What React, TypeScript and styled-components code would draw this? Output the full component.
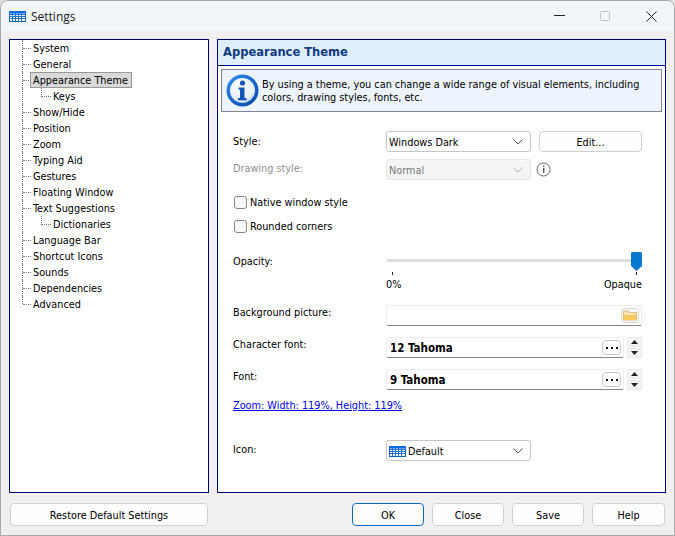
import React from "react";
import styled, { createGlobalStyle, css } from "styled-components";

const Global = createGlobalStyle`
  html, body { margin: 0; padding: 0; background: #dcdcdc; }
  body {
    font-family: "DejaVu Sans Condensed", "DejaVu Sans", "Noto Sans", sans-serif;
    font-stretch: condensed;
    font-size: 10.8px;
    color: #000;
  }
  * { box-sizing: border-box; }
`;

const Window = styled.div`
  width: 675px;
  height: 536px;
  display: flex;
  flex-direction: column;
  background: #f0f0f0;
  border: 1px solid #a8a8a8;
  border-radius: 8px 8px 0 0;
  overflow: hidden;
`;

const TitleBar = styled.div`
  height: 30px;
  flex: none;
  display: flex;
  align-items: center;
  padding-left: 8px;
  background: #f3f6f9;
`;

const TitleText = styled.span`
  margin-left: 5px;
  font-size: 12px;
  font-family: "Open Sans", "Liberation Sans", sans-serif;
  font-stretch: normal;
  color: #1a1a1a;
`;

const WindowButtons = styled.div`
  margin-left: auto;
  display: flex;
  align-items: center;
`;

const WindowButton = styled.span`
  width: 46px;
  height: 30px;
  display: flex;
  align-items: center;
  justify-content: center;
`;

const Main = styled.div`
  flex: 1;
  min-height: 0;
  display: flex;
  gap: 8px;
  padding: 8px 8px 0;
`;

const Tree = styled.ul`
  list-style: none;
  width: 200px;
  height: 454px;
  margin: 0;
  padding: 0 0 0 12px;
  background: #fff;
  border: 1px solid #000080;
`;

const TreeRow = styled.li<{ $child?: boolean }>`
  height: 16px;
  display: flex;
  align-items: center;
  border-left: 1px dotted #777;
  padding-left: ${(p) => (p.$child ? "18px" : "0")};
  position: relative;
`;

const Elbow = styled.span<{ $child?: boolean }>`
  flex: none;
  width: ${(p) => (p.$child ? "10px" : "8px")};
  height: 0;
  border-top: 1px dotted #777;
  ${(p) =>
    p.$child &&
    css`
      position: relative;
      &::before {
        content: "";
        position: absolute;
        left: 0;
        top: -9px;
        height: 9px;
        border-left: 1px dotted #777;
      }
    `}
`;

const LastMask = styled.span`
  position: absolute;
  left: -1px;
  top: 9px;
  width: 1px;
  height: 7px;
  background: #fff;
`;

const TreeLabel = styled.span<{ $selected?: boolean }>`
  line-height: 14px;
  padding: 2px 2px 0;
  ${(p) =>
    p.$selected &&
    css`
      height: 16px;
      background: #d9d9d9;
      border: 1px solid #999;
      margin-left: -1px;
      padding: 1px 3px 0 2px;
    `}
`;

const Panel = styled.div`
  width: 449px;
  height: 454px;
  background: #fff;
  border: 1px solid #000080;
`;

const PanelHeader = styled.div`
  height: 26px;
  display: flex;
  align-items: center;
  padding: 0 0 2px 5px;
  background: #e1eefe;
  border-bottom: 1px solid #000080;
  color: #0f3c80;
  font-weight: 700;
  font-size: 12.8px;
`;

const InfoBox = styled.div`
  margin: 3px 3px 0;
  height: 43px;
  display: flex;
  align-items: center;
  gap: 3px;
  padding-left: 4px;
  background: #eef4fe;
  border: 1px solid #7f8593;
  line-height: 13px;
`;

const Form = styled.div`
  padding: 19px 23px 0 15px;
  display: flex;
  flex-direction: column;
`;

const Row = styled.div<{ $top?: number }>`
  display: flex;
  align-items: center;
  min-height: 21px;
  margin-top: ${(p) => p.$top ?? 0}px;
`;

const Label = styled.span<{ $disabled?: boolean; $lift?: number }>`
  width: 153px;
  flex: none;
  color: ${(p) => (p.$disabled ? "#8f8f8f" : "#000")};
  padding-bottom: ${(p) => p.$lift ?? 0}px;
`;

const Select = styled.div<{ $disabled?: boolean }>`
  width: 145px;
  height: 21px;
  display: flex;
  align-items: center;
  padding: 0 7px 0 2px;
  background: ${(p) => (p.$disabled ? "#f5f5f5" : "#fff")};
  border: 1px solid ${(p) => (p.$disabled ? "#e4e4e4" : "#c6c6c6")};
  border-radius: 3px;
  color: ${(p) => (p.$disabled ? "#777" : "#000")};
`;

const SelectValue = styled.span`
  flex: 1;
  display: flex;
  align-items: center;
  gap: 2px;
  padding-top: 2px;
`;

const Button = styled.button<{ $primary?: boolean; $width?: number }>`
  width: ${(p) => p.$width ?? 72}px;
  height: 23px;
  padding: 2px 0 0;
  font: inherit;
  color: #000;
  background: #fdfdfd;
  border: 1px solid ${(p) => (p.$primary ? "#0a6cc8" : "#d0d0d0")};
  border-radius: 4px;
`;

const EditButton = styled(Button)`
  height: 21px;
  margin-left: 8px;
  width: 103px;
`;

const HelpIcon = styled.span`
  margin-left: 5px;
  display: flex;
`;

const CheckRow = styled.label<{ $top: number }>`
  display: flex;
  align-items: center;
  gap: 3px;
  height: 14px;
  padding-left: 1px;
  margin-top: ${(p) => p.$top}px;
`;

const CheckBox = styled.span`
  width: 13px;
  height: 13px;
  background: #f8f8f8;
  border: 1px solid #868686;
  border-radius: 3px;
`;

const SliderRow = styled.div`
  display: flex;
  align-items: flex-start;
  margin-top: 18px;
`;

const SliderLabel = styled(Label)`
  padding-top: 4px;
`;

const Slider = styled.div`
  width: 256px;
  display: flex;
  flex-direction: column;
`;

const Track = styled.div`
  height: 20px;
  display: flex;
  align-items: center;
  justify-content: flex-end;
  position: relative;
`;

const TrackLine = styled.span`
  position: absolute;
  left: 1px;
  right: 6px;
  top: 8px;
  height: 3px;
  background: #dcdcdc;
`;

const Thumb = styled.span`
  position: relative;
  display: flex;
`;

const Ticks = styled.div`
  display: flex;
  justify-content: space-between;
  padding: 1px 5px 0 6px;
`;

const Tick = styled.span`
  width: 1px;
  height: 3px;
  background: #222;
`;

const SliderLabels = styled.div`
  display: flex;
  justify-content: space-between;
  margin-top: 3px;
  line-height: 14px;
`;

const Field = styled.div<{ $width: number }>`
  width: ${(p) => p.$width}px;
  height: 21px;
  display: flex;
  align-items: center;
  justify-content: flex-end;
  padding: 0 2px 0 3px;
  background: #fff;
  border: 1px solid #ececec;
  border-bottom: 1px solid #858585;
  border-radius: 2px;
`;

const FieldValue = styled.span`
  flex: 1;
  font-weight: 700;
  font-size: 11.5px;
`;

const IconButton = styled.span`
  width: 19px;
  height: 15px;
  display: flex;
  align-items: center;
  justify-content: center;
  gap: 3px;
  background: #fdfdfd;
  border: 1px solid #c8c8c8;
  border-radius: 4px;
`;

const Dot = styled.span`
  width: 2px;
  height: 2px;
  background: #111;
`;

const Spin = styled.div`
  margin-left: 3px;
  width: 15px;
  height: 21px;
  display: flex;
  flex-direction: column;
  gap: 1px;
`;

const SpinPart = styled.span`
  flex: 1;
  display: flex;
  align-items: center;
  justify-content: center;
  background: #f4f4f4;
  border: 1px solid #e8e8e8;
`;

const ZoomLink = styled.a`
  margin-top: 9px;
  color: #0000ee;
  text-decoration: underline;
  line-height: 14px;
`;

const Footer = styled.div`
  height: 42px;
  flex: none;
  display: flex;
  align-items: flex-start;
  padding: 10px 9px 0;
`;

const RestoreButton = styled(Button)`
  width: 198px;
`;

const FooterActions = styled.div`
  margin-left: auto;
  display: flex;
  gap: 8px;
`;

const Keyboard = () => (
  <svg width="17" height="13" viewBox="0 0 17 13">
    <rect x="0.5" y="1.5" width="16" height="10" fill="#fff" stroke="#0a64c8" />
    <path
      d="M0.5 4.5h16M0.5 6.5h16M0.5 8.5h16M3.5 2v9M6.5 2v9M9.5 2v9M12.5 2v9"
      stroke="#0a64c8"
      strokeWidth="1"
      opacity="0.9"
    />
    <rect x="0" y="1" width="17" height="2.5" fill="#0a6ce0" />
  </svg>
);

const InfoIcon = () => (
  <svg width="33" height="33" viewBox="0 0 33 33">
    <defs>
      <radialGradient id="ig" cx="0.4" cy="0.3" r="0.8">
        <stop offset="0" stopColor="#fff" />
        <stop offset="0.7" stopColor="#e8eef8" />
        <stop offset="1" stopColor="#b8c8e0" />
      </radialGradient>
      <linearGradient id="ring" x1="0" y1="0" x2="1" y2="1">
        <stop offset="0" stopColor="#2f8df0" />
        <stop offset="1" stopColor="#0646a8" />
      </linearGradient>
    </defs>
    <circle cx="16.5" cy="16.5" r="16" fill="url(#ring)" />
    <circle cx="16.5" cy="16.5" r="12.5" fill="url(#ig)" />
    <circle cx="16.5" cy="9" r="2.6" fill="#1257b8" />
    <path d="M12.5 13.5h6v10.5h2v2.2h-8.5V24h2V15.7h-1.5z" fill="#1257b8" />
  </svg>
);

const HelpGlyph = () => (
  <svg width="15" height="15" viewBox="0 0 15 15">
    <circle cx="7.5" cy="7.5" r="6.5" fill="none" stroke="#6e6e6e" />
    <rect x="7" y="3.5" width="1.4" height="1.5" fill="#555" />
    <rect x="7" y="6" width="1.4" height="5" fill="#555" />
  </svg>
);

const Chevron = ({ color = "#555" }: { color?: string }) => (
  <svg width="10" height="6" viewBox="0 0 10 6">
    <path d="M0.5 0.5L5 5L9.5 0.5" fill="none" stroke={color} />
  </svg>
);

const Folder = () => (
  <svg width="18" height="15" viewBox="0 0 18 15">
    <rect x="0.5" y="0.5" width="17" height="14" rx="3" fill="#f8f8f8" stroke="#d4d4d4" />
    <path d="M2.5 3h5l1 1.5h7V12h-13z" fill="#f6e3b0" stroke="#d9a84e" strokeWidth="0.7" />
    <rect x="3" y="7" width="12" height="5" fill="#f6c95c" />
  </svg>
);

const SpinArrow = ({ up }: { up?: boolean }) => (
  <svg width="7" height="4" viewBox="0 0 7 4">
    <path d={up ? "M3.5 0L7 4H0z" : "M0 0H7L3.5 4z"} fill="#222" />
  </svg>
);

const FontSpin = () => (
  <Spin>
    <SpinPart>
      <SpinArrow up />
    </SpinPart>
    <SpinPart>
      <SpinArrow />
    </SpinPart>
  </Spin>
);

const Ellipsis = () => (
  <IconButton>
    <Dot />
    <Dot />
    <Dot />
  </IconButton>
);

const TREE: { label: string; child?: boolean; selected?: boolean; last?: boolean }[] = [
  { label: "System" },
  { label: "General" },
  { label: "Appearance Theme", selected: true },
  { label: "Keys", child: true },
  { label: "Show/Hide" },
  { label: "Position" },
  { label: "Zoom" },
  { label: "Typing Aid" },
  { label: "Gestures" },
  { label: "Floating Window" },
  { label: "Text Suggestions" },
  { label: "Dictionaries", child: true },
  { label: "Language Bar" },
  { label: "Shortcut Icons" },
  { label: "Sounds" },
  { label: "Dependencies" },
  { label: "Advanced", last: true },
];

export default function App() {
  return (
    <>
      <Global />
      <Window>
        <TitleBar>
          <Keyboard />
          <TitleText>Settings</TitleText>
          <WindowButtons>
            <WindowButton>
              <svg width="11" height="2" viewBox="0 0 11 2">
                <rect width="11" height="1" fill="#222" />
              </svg>
            </WindowButton>
            <WindowButton>
              <svg width="11" height="11" viewBox="0 0 11 11">
                <rect x="0.5" y="0.5" width="9" height="9" rx="1" fill="none" stroke="#bdbdbd" />
              </svg>
            </WindowButton>
            <WindowButton>
              <svg width="11" height="11" viewBox="0 0 11 11">
                <path d="M0.5 0.5L10.5 10.5M10.5 0.5L0.5 10.5" stroke="#222" />
              </svg>
            </WindowButton>
          </WindowButtons>
        </TitleBar>
        <Main>
          <Tree>
            {TREE.map((item) => (
              <TreeRow key={item.label} $child={item.child}>
                <Elbow $child={item.child} />
                <TreeLabel $selected={item.selected}>{item.label}</TreeLabel>
                {item.last && <LastMask />}
              </TreeRow>
            ))}
          </Tree>
          <Panel>
            <PanelHeader>Appearance Theme</PanelHeader>
            <InfoBox>
              <InfoIcon />
              <span>
                By using a theme, you can change a wide range of visual elements, including
                <br />
                colors, drawing styles, fonts, etc.
              </span>
            </InfoBox>
            <Form>
              <Row>
                <Label>Style:</Label>
                <Select>
                  <SelectValue>Windows Dark</SelectValue>
                  <Chevron />
                </Select>
                <EditButton>Edit...</EditButton>
              </Row>
              <Row $top={7}>
                <Label $disabled $lift={2}>Drawing style:</Label>
                <Select $disabled>
                  <SelectValue>Normal</SelectValue>
                  <Chevron color="#b5b5b5" />
                </Select>
                <HelpIcon>
                  <HelpGlyph />
                </HelpIcon>
              </Row>
              <CheckRow $top={15}>
                <CheckBox />
                Native window style
              </CheckRow>
              <CheckRow $top={10}>
                <CheckBox />
                Rounded corners
              </CheckRow>
              <SliderRow>
                <SliderLabel $lift={2}>Opacity:</SliderLabel>
                <Slider>
                  <Track>
                    <TrackLine />
                    <Thumb>
                      <svg width="11" height="19" viewBox="0 0 11 19">
                        <path d="M0 1.5Q0 0 1.5 0H9.5Q11 0 11 1.5V14L5.5 19L0 14z" fill="#0678d4" />
                      </svg>
                    </Thumb>
                  </Track>
                  <Ticks>
                    <Tick />
                    <Tick />
                  </Ticks>
                  <SliderLabels>
                    <span>0%</span>
                    <span>Opaque</span>
                  </SliderLabels>
                </Slider>
              </SliderRow>
              <Row $top={13}>
                <Label $lift={6}>Background picture:</Label>
                <Field $width={256}>
                  <Folder />
                </Field>
              </Row>
              <Row $top={11}>
                <Label $lift={6}>Character font:</Label>
                <Field $width={238}>
                  <FieldValue>12 Tahoma</FieldValue>
                  <Ellipsis />
                </Field>
                <FontSpin />
              </Row>
              <Row $top={11}>
                <Label $lift={6}>Font:</Label>
                <Field $width={238}>
                  <FieldValue>9 Tahoma</FieldValue>
                  <Ellipsis />
                </Field>
                <FontSpin />
              </Row>
              <ZoomLink href="#">Zoom: Width: 119%, Height: 119%</ZoomLink>
              <Row $top={27}>
                <Label $lift={2}>Icon:</Label>
                <Select>
                  <SelectValue>
                    <Keyboard />
                    Default
                  </SelectValue>
                  <Chevron />
                </Select>
              </Row>
            </Form>
          </Panel>
        </Main>
        <Footer>
          <RestoreButton>Restore Default Settings</RestoreButton>
          <FooterActions>
            <Button $primary>OK</Button>
            <Button>Close</Button>
            <Button>Save</Button>
            <Button $width={73}>Help</Button>
          </FooterActions>
        </Footer>
      </Window>
    </>
  );
}
